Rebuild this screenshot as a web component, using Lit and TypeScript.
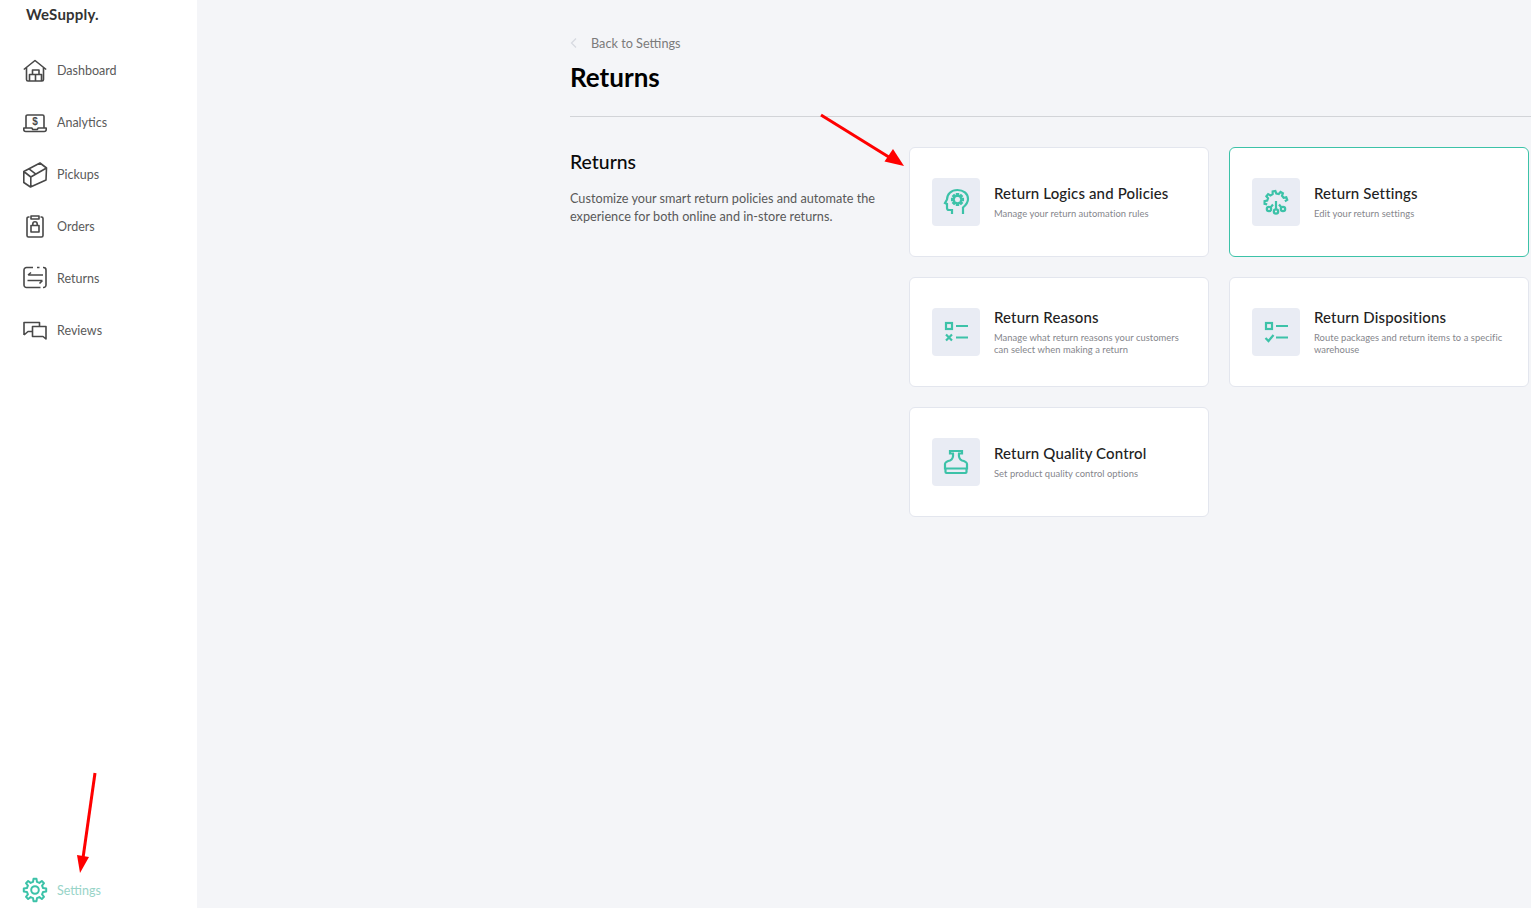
import { LitElement, html, css, svg } from "lit";
import { customElement } from "lit/decorators.js";

function gear(cx: number, cy: number, ro: number, ri: number, teeth: number, start = 0, end = 360, closed = true) {
  const pts: string[] = [];
  const step = 360 / teeth;
  const pt = (a: number, r: number) => {
    const t = (a * Math.PI) / 180;
    return `${(cx + r * Math.cos(t)).toFixed(2)} ${(cy + r * Math.sin(t)).toFixed(2)}`;
  };
  for (let a = start; a < end - 0.01; a += step) {
    pts.push(pt(a - step * 0.3, ri), pt(a - step * 0.17, ro), pt(a + step * 0.17, ro), pt(a + step * 0.3, ri));
  }
  return "M" + pts.join("L") + (closed ? "Z" : "");
}

const navIcons: Record<string, unknown> = {
  Dashboard: svg`<path d="M.8 11.5 12 2.5l11.2 9M3.5 9.5v12a1.5 1.5 0 0 0 1.5 1.5h14a1.5 1.5 0 0 0 1.5-1.5v-12M6.5 23v-6.5h6V23M12.5 16.500h6V23M9.500 16.500V12h6.500v4.500"/>`,
  Analytics: svg`<path d="M3 17.500V6.500A1.500 1.500 0 0 1 4.500 5h15A1.500 1.500 0 0 1 21 6.500v11M.8 18h8l1 1.500h4.400l1-1.500h8v1.500a2 2 0 0 1-2 2H2.800a2 2 0 0 1-2-2Z"/><text x="12" y="15" text-anchor="middle" class="dollar">$</text>`,
  Pickups: svg`<path d="M.8 9.500 17 1l6.500 5-.5 12-15.500 7L.8 20.500ZM.8 9.500l7 5.500L23.500 6M7.800 15v10M6 6.800l6.500 5"/>`,
  Orders: svg`<path d="M6.500 3H5.500A1.500 1.500 0 0 0 4 4.500v17A1.500 1.500 0 0 0 5.500 23h13a1.500 1.500 0 0 0 1.500-1.500v-17A1.500 1.500 0 0 0 18.500 3h-1M8 2h8v3H8ZM8 11.500h8V18H8ZM9.800 11.500V10a2.200 2.200 0 0 1 4.400 0v1.500"/>`,
  Returns: svg`<path d="M10 1.500H3.500a2.500 2.500 0 0 0-2.500 2.500v15a2.500 2.500 0 0 0 2.500 2.500h14M20 1.500h.5A2.500 2.500 0 0 1 23 4v15a2.500 2.500 0 0 1-2.500 2.500H20M14 1.500h2.500M5 9h15M5 9l3-2.500M19.500 14.500H4.500M19.500 14.500l-3 3"/>`,
  Reviews: svg`<path d="M1 17V4.500h15.500V8M1 17l4-3.500h4.500M9.500 8.500h13.500v12.500l-3-2.500H9.500Z"/>`,
};

const cardIcons: Record<string, unknown> = {
  logic: svg`<path d="M31 36v-6.500c3-2.500 5-5 5-8.500 0-5.500-4.800-9-10.500-9-6.300 0-10.500 4-10.500 9.500l-2 3.500 2 1v4a2 2 0 0 0 2 2h3v4"/><path d="${gear(25.5, 21.5, 5.600, 3.600, 8)}" stroke-width="2"/>`,
  settings: svg`<path d="${gear(24, 24.500, 11.500, 9, 9, 180, 361, false)}"/><circle cx="17" cy="31" r="2.200"/><circle cx="24" cy="33.500" r="2.200"/><circle cx="31" cy="31" r="2.200"/><path d="M24 31.300V23M18.500 29.500 21 26.500M29.500 29.500 27 26.500"/>`,
  reasons: svg`<rect x="14" y="15" width="6" height="6"/><path d="M24 18h12M14 26.500l6 6M20 26.500l-6 6M24 29.500h12"/>`,
  dispositions: svg`<rect x="14" y="15" width="6" height="6"/><path d="M24 18h12M13.500 30l3 3 5-6M24 29.500h12"/>`,
  quality: svg`<path d="M18 13h12v2.500h-3c-.5 4 .5 6 3 7 3 .8 5 1.500 5 3.500v4.500H13V26c0-2 2-2.700 5-3.500 2.500-1 3.500-3 3-7h-3ZM13.500 30.500V34a1 1 0 0 0 1 1h19a1 1 0 0 0 1-1v-3.500"/>`,
};

const cards = [
  { icon: "logic", title: "Return Logics and Policies", sub: ["Manage your return automation rules"] },
  { icon: "settings", title: "Return Settings", sub: ["Edit your return settings"], active: true },
  { icon: "reasons", title: "Return Reasons", sub: ["Manage what return reasons your customers", "can select when making a return"] },
  { icon: "dispositions", title: "Return Dispositions", sub: ["Route packages and return items to a specific", "warehouse"] },
  { icon: "quality", title: "Return Quality Control", sub: ["Set product quality control options"] },
];

@customElement("app-root")
export class AppRoot extends LitElement {
  static styles = css`
    :host {
      display: block;
      position: relative;
      height: 908px;
      overflow: hidden;
      background: #f4f5f8;
      font-family: "Lato", "Open Sans", sans-serif;
    }
    .page { display: grid; grid-template-columns: 197px 1fr; height: 100%; }
    .side { background: #fff; display: flex; flex-direction: column; }
    .logo {
      height: 44px; box-sizing: border-box; padding: 0 0 14px 26px; margin-top: -1px; margin-bottom: 1px;
      font-size: 15px; font-weight: 700; line-height: 30px; color: #333;
      letter-spacing: 0.2px;
    }
    .nav { display: flex; flex-direction: column; }
    .row { height: 52px; display: flex; align-items: center; padding-left: 23px; gap: 10px;
      font-size: 12.500px; color: #5a5a5a; line-height: 52px; }
    .row span { padding-top: 1px; }
    .row svg { width: 24px; height: 24px; flex: none; fill: none; stroke: #484848; stroke-width: 1.600; stroke-linejoin: round; overflow: visible; }
    .dollar { font: 700 10px "Liberation Sans", sans-serif; fill: #484848; stroke: none; }
    .settings { margin-top: auto; height: 36px; color: #98d4c8; }
    .settings svg { stroke: #3cc2a8; stroke-width: 2; }
    .main { padding: 33px 0 0 373px; min-width: 0; }
    .back { display: flex; align-items: center; gap: 14px; height: 20px; font-size: 12.700px; color: #7b7b7b; }
    .back svg { width: 7px; height: 10px; fill: none; stroke: #d6d9e0; stroke-width: 1.200; }
    h1 { margin: 6px 0 0; font-size: 26px; line-height: 36px; font-weight: 700; color: #000; }
    hr { margin: 21px 0 30px; border: 0; border-top: 1px solid #d2d4d8; }
    .section { display: grid; grid-template-columns: 339px 620px; }
    h2 { margin: 3px 0 15px; font-size: 19.400px; line-height: 24px; font-weight: 500; color: #0a0a0a; }
    .desc { margin: 0; width: 320px; font-size: 12.700px; line-height: 18px; color: #595959; }
    .cards { display: grid; grid-template-columns: 300px 300px; grid-auto-rows: 110px; gap: 20px; }
    .card {
      box-sizing: border-box; background: #fff; border: 1px solid #e3e6ee; border-radius: 6px;
      padding-left: 22px; display: flex; align-items: center; gap: 14px;
    }
    .card.active { border-color: #3cc2a8; }
    .tile { width: 48px; height: 48px; flex: none; border-radius: 4px; background: #e9ecf4; }
    .tile svg { display: block; width: 48px; height: 48px; fill: none; stroke: #3cc2a8; stroke-width: 2.200; }
    .text { padding-bottom: 2px; }
    .ct { font-size: 15px; line-height: 20px; font-weight: 500; color: #222; letter-spacing: 0.14px; white-space: nowrap; }
    .cs { margin-top: 5px; font-size: 9.400px; line-height: 12px; color: #85868c; letter-spacing: 0.05px; white-space: nowrap; }
    .arrows { position: absolute; inset: 0; width: 1531px; height: 908px; pointer-events: none; }
  `;

  render() {
    return html`
      <div class="page">
        <aside class="side">
          <div class="logo">WeSupply.</div>
          <nav class="nav">
            ${Object.entries(navIcons).map(([label, icon]) => html`
              <div class="row"><svg viewBox="0 0 24 24">${icon}</svg><span>${label}</span></div>
            `)}
          </nav>
          <div class="row settings">
            <svg viewBox="0 0 24 24">
              <path d="${gear(12, 12, 11.300, 8.300, 8, 0)}"/>
              <circle cx="12" cy="12" r="3.800"/>
            </svg>
            <span>Settings</span>
          </div>
        </aside>
        <main class="main">
          <div class="back">
            <svg viewBox="0 0 7 10"><path d="M6 .5 1.500 5 6 9.500"/></svg>
            <span>Back to Settings</span>
          </div>
          <h1>Returns</h1>
          <hr />
          <section class="section">
            <div>
              <h2>Returns</h2>
              <p class="desc">Customize your smart return policies and automate the experience for both online and in-store returns.</p>
            </div>
            <div class="cards">
              ${cards.map((c) => html`
                <div class="card ${c.active ? "active" : ""}">
                  <div class="tile"><svg viewBox="0 0 48 48">${cardIcons[c.icon]}</svg></div>
                  <div class="text">
                    <div class="ct">${c.title}</div>
                    <div class="cs">${c.sub.map((l) => html`<div>${l}</div>`)}</div>
                  </div>
                </div>
              `)}
            </div>
          </section>
        </main>
      </div>
      <svg class="arrows" viewBox="0 0 1531 908">
        <path d="M821 115 892 159" stroke="#f00" stroke-width="3" fill="none"/>
        <path d="M904 166 884.500 161.500 893 149Z" fill="#f00"/>
        <path d="M95 773 83 858" stroke="#f00" stroke-width="3" fill="none"/>
        <path d="M80 873 77 855 89 857Z" fill="#f00"/>
      </svg>
    `;
  }
}
